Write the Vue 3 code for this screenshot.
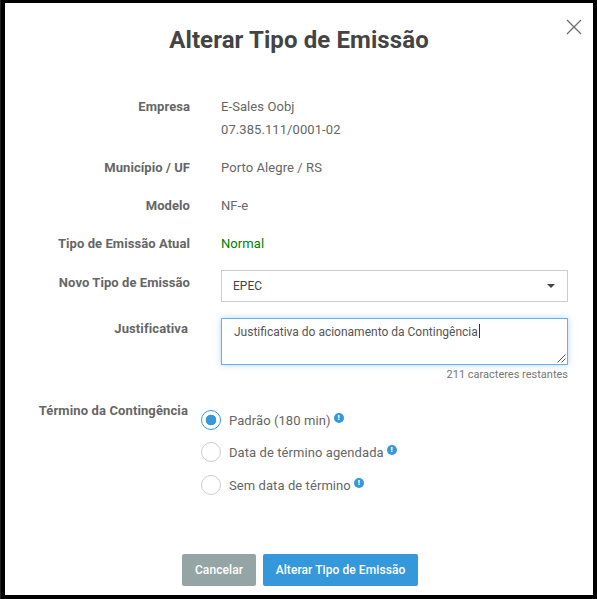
<script setup>
const rows = [
  { label: 'Município / UF', value: 'Porto Alegre / RS' },
  { label: 'Modelo', value: 'NF-e' },
  { label: 'Tipo de Emissão Atual', value: 'Normal', status: true },
]

const options = [
  { label: 'Padrão (180 min)', checked: true },
  { label: 'Data de término agendada', checked: false },
  { label: 'Sem data de término', checked: false },
]
</script>

<template>
  <div class="stage">
    <div class="modal">
      <button type="button" class="close" aria-label="Fechar">
        <svg width="16" height="16" viewBox="0 0 16 16">
          <path d="M1 1 L15 15 M15 1 L1 15" stroke="#6f6f6f" stroke-width="1.3" fill="none" />
        </svg>
      </button>

      <h2 class="title">Alterar Tipo de Emissão</h2>

      <div class="form">
        <div class="row row-company">
          <span class="label">Empresa</span>
          <div class="value">
            <div>E-Sales Oobj</div>
            <div class="cnpj">07.385.111/0001-02</div>
          </div>
        </div>

        <div v-for="row in rows" :key="row.label" class="row">
          <span class="label">{{ row.label }}</span>
          <span class="value" :class="{ status: row.status }">{{ row.value }}</span>
        </div>

        <div class="row row-select">
          <span class="label label-select">Novo Tipo de Emissão</span>
          <div class="select">
            <span>EPEC</span>
            <i class="caret"></i>
          </div>
        </div>

        <div class="row row-text">
          <span class="label label-text label-just">Justificativa</span>
          <div>
            <div class="textarea">
              <span>Justificativa do acionamento da Contingência</span><i class="cursor"></i>
              <svg class="grip" width="9" height="9" viewBox="0 0 9 9">
                <path d="M0.5 8.5 L8.5 0.5 M4.5 8.5 L8.5 4.5" stroke="#555" stroke-width="1" fill="none" />
              </svg>
            </div>
            <div class="counter">211 caracteres restantes</div>
          </div>
        </div>

        <div class="row row-radios">
          <span class="label label-text">Término da Contingência</span>
          <div class="radios">
            <div v-for="opt in options" :key="opt.label" class="radio-line">
              <span class="radio" :class="{ on: opt.checked }"></span>
              <span class="radio-text">{{ opt.label }}</span>
              <span class="info">!</span>
            </div>
          </div>
        </div>
      </div>

      <div class="actions">
        <button type="button" class="btn btn-cancel">Cancelar</button>
        <button type="button" class="btn btn-primary">Alterar Tipo de Emissão</button>
      </div>
    </div>
  </div>
</template>

<style>
html,
body {
  margin: 0;
  background: #000;
}
</style>

<style scoped>
.stage {
  width: 597px;
  height: 599px;
  box-sizing: border-box;
  padding: 3px 4px 4px 4px;
  border-left: 1px solid #222;
  background: #000;
  font-family: Roboto, "Liberation Sans", sans-serif;
  overflow: hidden;
}

.modal {
  position: relative;
  height: 592px;
  background: #fff;
  box-sizing: border-box;
  padding-top: 21px;
}

.close {
  position: absolute;
  top: 16px;
  right: 11px;
  padding: 0;
  border: 0;
  background: none;
  line-height: 0;
}

.title {
  margin: 0;
  text-align: center;
  font-size: 24px;
  line-height: 32px;
  font-weight: 700;
  letter-spacing: 0.1px;
  color: #444;
}

.form {
  margin-top: 41px;
}

.row {
  display: grid;
  grid-template-columns: 185px 347px;
  column-gap: 31px;
  font-size: 13px;
  line-height: 20px;
  color: #666;
  margin-bottom: 18px;
}

.value {
  letter-spacing: 0.08px;
}

.cnpj {
  margin-top: 3px;
}

.label {
  text-align: right;
  font-weight: 700;
  letter-spacing: 0.07px;
}

.label-select {
  padding-top: 3px;
}

.label-text {
  padding-right: 2px;
  letter-spacing: 0.12px;
}

.label-just {
  padding-top: 1px;
}

.status {
  color: #008000;
}

.row-select {
  margin-top: -2px;
  margin-bottom: 16px;
}

.select {
  display: flex;
  align-items: center;
  justify-content: space-between;
  height: 32px;
  box-sizing: border-box;
  padding: 0 12px 0 11px;
  border: 1px solid #ccc;
  font-size: 12px;
  color: #444;
}

.caret {
  width: 0;
  height: 0;
  border-left: 4px solid transparent;
  border-right: 4px solid transparent;
  border-top: 4px solid #444;
}

.row-text {
  margin-bottom: 19px;
}

.textarea {
  position: relative;
  height: 47px;
  box-sizing: border-box;
  padding: 4px 12px;
  border: 1px solid #66afe9;
  box-shadow: 0 0 6px rgba(102, 175, 233, 0.5);
  font-size: 12px;
  line-height: 18px;
  color: #555;
}

.cursor {
  display: inline-block;
  width: 1px;
  height: 14px;
  margin-left: 1px;
  vertical-align: -2px;
  background: #333;
}

.grip {
  position: absolute;
  right: 1px;
  bottom: 1px;
}

.counter {
  margin-top: 3px;
  text-align: right;
  font-size: 11px;
  line-height: 14px;
  color: #777;
}

.radios {
  display: flex;
  flex-direction: column;
  gap: 11.5px;
  margin-left: -20px;
  padding-top: 8px;
}

.radio-line {
  display: flex;
  align-items: center;
  height: 21px;
}

.radio {
  box-sizing: border-box;
  width: 20px;
  height: 20px;
  border: 1px solid #ccc;
  border-radius: 50%;
  margin-right: 8px;
}

.radio.on {
  border: 1.5px solid #3498db;
  background: radial-gradient(circle, #3498db 0 5px, #fff 5.6px);
}

.radio-text {
  margin-top: 2px;
  font-size: 13px;
  letter-spacing: 0.08px;
  color: #666;
}

.info {
  width: 10px;
  height: 10px;
  margin: -4px 0 0 3px;
  border-radius: 50%;
  background: #3498db;
  color: #fff;
  font-size: 8px;
  line-height: 10px;
  font-weight: 900;
  text-align: center;
}

.actions {
  position: absolute;
  left: 177px;
  bottom: 9px;
  display: flex;
  gap: 7px;
}

.btn {
  height: 32px;
  border: 0;
  border-radius: 2px;
  color: #fff;
  font-family: inherit;
  font-size: 12px;
  font-weight: 500;
  letter-spacing: 0.08px;
  padding: 0;
}

.btn-cancel {
  width: 74px;
  background: #95a5a6;
}

.btn-primary {
  width: 155px;
  background: #3498db;
}
</style>
